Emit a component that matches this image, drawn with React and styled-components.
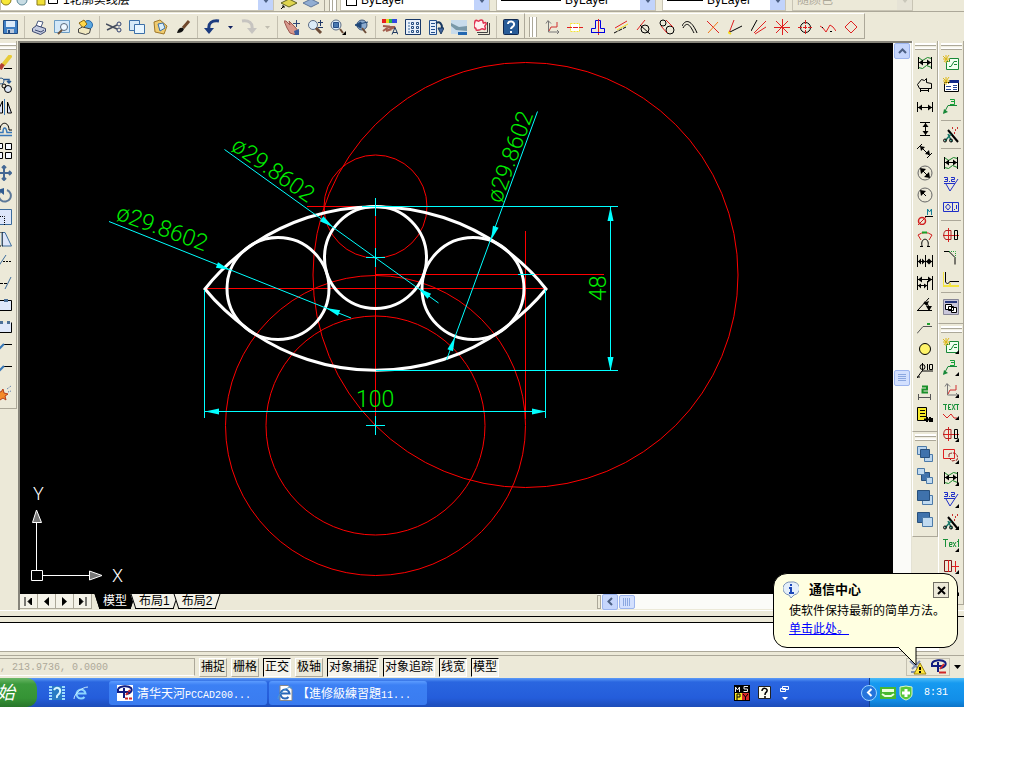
import React from 'react'
import styled, { createGlobalStyle, css } from 'styled-components'

const GlobalStyle = createGlobalStyle`
* {
    box-sizing: border-box;
}

body {
    margin: 0;
    background: #fff;
    font-family: "Liberation Sans", "Noto Sans CJK SC", sans-serif;
    font-size: 12px;
    color: #000;
}

button, select, input {
    font: inherit;
    color: inherit;
}
`;

/* every toolbar glyph, drawn on a 16 x 16 grid */
const glyphs = {
    save: <><path d="M1.5 1.5h14v13h-14z" fill="#3f7fc4" stroke="#204a80" /><path d="M4 2h9v6H4z" fill="#dcebfa" stroke="none" /><path d="M5 10h7v4H5z" fill="#b8c8dc" stroke="none" /><path d="M6 11h2v3H6z" fill="#204a80" stroke="none" /></>,
    print: <><path d="M5 7l2-5 5 1-2 5z" fill="#fff" stroke="#4a5a80" /><path d="M1.5 9.500l4-3 9 3v3l-5 3-8-3z" fill="#c4cce0" stroke="#3c4870" /><path d="M4 11l6 2 3-2" stroke="#3c4870" /></>,
    preview: <><path d="M.5 1.500h15v12H.5z" fill="#d3e8f8" stroke="#6b9cc4" /><circle cx="10" cy="8" r="3.500" fill="#eef8ff" stroke="#58687c" /><path d="M8 11l-4 4" stroke="#6d5038" strokeWidth="2" /></>,
    publish: <><circle cx="11" cy="6" r="4.500" fill="#5aa8e0" stroke="#2868a8" /><path d="M2 4l5-3 3 4-4 4z" fill="#ffd84a" stroke="#8a6814" /><path d="M1.500 10l4-2 8 2-1 4-4 1.500-7-2z" fill="#f0e8c0" stroke="#444" /></>,
    cut: <><path d="M0 5l11 5M1 11l10-5" stroke="#444c5c" strokeWidth="1.500" /><circle cx="13" cy="5" r="2" stroke="#304070" /><circle cx="13" cy="11" r="2" stroke="#304070" /></>,
    copy: <><path d="M.500 1.500h10v10H.5z" fill="#d6eaf8" stroke="#3c70a8" /><path d="M5.500 5.500h10v9h-10z" fill="#e8f6ff" stroke="#3c70a8" /></>,
    paste: <><path d="M2 3l6-2 7 6-3 8-9-2z" fill="#f0cc70" stroke="#a07828" /><path d="M6 5l5-1 2 5-5 3z" fill="#d6ecfa" stroke="#3c70a8" /></>,
    brush: <><path d="M14 2L8 9" stroke="#70482c" strokeWidth="3" /><path d="M2 14c1-4 3-6 6-5l1 1c-1 3-4 4-7 4z" fill="#111" stroke="none" /></>,
    undo: <><path d="M15 2C8 1 4 4 5 10" stroke="#1c3c80" strokeWidth="3" /><path d="M0 9h10l-5 6z" fill="#1c3c80" stroke="none" /></>,
    redo: <><path d="M1 2c7-1 11 2 10 8" stroke="#c6c4c0" strokeWidth="3" /><path d="M6 9h10l-5 6z" fill="#c6c4c0" stroke="none" /></>,
    pan: <><path d="M0 2l2 0 4 4-1-4 6 6 4 5-3 3-6-2-3-5z" fill="#d8988c" stroke="#9c5850" /><path d="M10 12l5-2v6h-4z" fill="#3c5c9c" stroke="none" /><path d="M12.500 1v7M9 4.500h7" stroke="#304878" /></>,
    zoomRt: <><circle cx="6" cy="6" r="4.500" fill="#dcecf8" stroke="#5c6c84" /><path d="M9 9l5 5" stroke="#6c4c38" strokeWidth="3" /><path d="M13.500 1v6M11 3.500h5M11 8.500h5" stroke="#203868" /></>,
    zoomWin: <><circle cx="6" cy="6" r="5" fill="#dcecf8" stroke="#5c6c84" /><path d="M3.500 3.500h5v5h-5z" fill="#4878b0" stroke="#244c88" /><path d="M10 10l3 4" stroke="#6c4c38" strokeWidth="2" /><path d="M16 12v4h-4z" fill="#000" stroke="none" /></>,
    zoomPrev: <><circle cx="9" cy="6" r="5" fill="#8cacd0" stroke="#405878" /><path d="M9 9l4 5" stroke="#6c4c38" strokeWidth="2" /><path d="M15 3L6 5M2 6l6-3v6z" fill="#204878" stroke="#204878" /></>,
    palette: <><path d="M0 0h4v4H0z" fill="#e82020" stroke="none" /><path d="M4 0h3v4H4z" fill="#e8d820" stroke="none" /><path d="M7 0h3v4H7z" fill="#28b848" stroke="none" /><path d="M10 0h5v4h-5z" fill="#3048e0" stroke="none" /><path d="M1 7l12 1-9 4 6-2M1 12l7-5" stroke="#a46050" strokeWidth="2" /><path d="M10 15.500l3-7 3 7M11 13.500h4" stroke="#203860" /></>,
    design: <><path d="M.5.500h15v15H.5z" fill="#e8f0fa" stroke="#183868" /><path d="M4 3v11" stroke="#3c6ca0" strokeDasharray="2 1" /><path d="M6.500 3.500h2v2h-2zM11.500 3.500h2v2h-2zM6.500 7.500h2v2h-2zM11.500 7.500h2v2h-2zM6.500 11.500h2v2h-2zM11.500 11.500h2v2h-2z" stroke="#244c80" /></>,
    tool: <><path d="M1.500 1.500h7v14h-7z" fill="#e4eefa" stroke="#24508c" /><path d="M3 4.500h4M3 7.500h4M3 10.500h4M3 13.500h4" stroke="#24508c" /><path d="M8 4c4-2 6 1 6 5" stroke="#183860" strokeWidth="2" /><path d="M10 9h6l-3 6z" fill="#4468a0" stroke="#183860" /></>,
    sheet: <><path d="M0 1h16v14H0z" fill="#c8dcec" stroke="none" /><path d="M0 4l8 4 8-1v5l-11-1-5-4z" fill="#7898a8" stroke="none" /><path d="M7 14.500h9" stroke="#2468b0" strokeWidth="3" /></>,
    markup: <><path d="M15.500 4v11.500H4M13.500 3v10.500H3" stroke="#444" /><path d="M1 2c2-2 3 1 4 0s4-2 4 1 2-1 3 1-2 2-1 4 0 3-2 2-2 1-4 1-3 1-3-1-2 0-2-3 1-3 1-5z" fill="#fff0f0" stroke="#e03050" strokeWidth="1.500" /></>,
    help: <><rect x="0.500" y="0.500" width="15" height="15" rx="1" fill="#285c98" stroke="#102850" /><path d="M5 5c0-4 7-3 6 1-.5 2-3 2-3 4M8 12v2" stroke="#fff" strokeWidth="2" /></>,
    axes: <><path d="M4.500 2v11H15M2 4.500l2-3 3 3M13 11l2 2-2 2" stroke="#777" /><path d="M5 12l2-4h6V3" stroke="#d03030" /></>,
    centerline: <><path d="M3.500 4.500h9v8h-9z" fill="#fff" stroke="#f4e430" strokeDasharray="2 1" /><path d="M0 8.500h16" stroke="#e02020" strokeDasharray="5 1" /></>,
    symmetry: <><path d="M1.500 13.500v-4h4v-8h5v8h4v4z" stroke="#0000e0" /><path d="M8.500 0v16" stroke="#e02020" /><path d="M1 13.500h14" stroke="#0000e0" /></>,
    parallel: <><path d="M2 9L14 2" stroke="#e02020" /><path d="M4 11l11-6" stroke="#f2df20" /><path d="M1 14l12-6" stroke="#000" strokeDasharray="4 1" /></>,
    tangent: <><path d="M1 11L9 1" stroke="#e02020" /><circle cx="9" cy="10" r="4" /><path d="M4 6l10 9" /></>,
    twoCircles: <><circle cx="4" cy="4" r="3" /><circle cx="11" cy="11" r="4" /><path d="M2 7l6 7M7 1l7 7" stroke="#e02020" /></>,
    offset: <><path d="M0 7C4-1 10 2 15 14" /><path d="M1 9c4-7 7-3 11 5" /></>,
    cross: <><path d="M2 2l12 12" stroke="#e02020" /><path d="M13 3L3 14" stroke="#f07818" /></>,
    angleLine: <><path d="M1 14L6 1" stroke="#e02020" /><path d="M2 13l12-6" /><path d="M0 13l3 2" stroke="#f6df20" strokeWidth="2" /></>,
    fan: <><path d="M0 12L6 1" /><path d="M3 14L15 2M4 15l11-7" stroke="#e02020" /></>,
    star: <path d="M8.500 0v16M0 8.500h16M2 2l12 12M14 2L2 14" stroke="#e02020" />,
    target: <><circle cx="8.500" cy="8.500" r="5" /><path d="M8.500 1v15M1 8.500h15" stroke="#e02020" strokeDasharray="4 1" /></>,
    wave: <><path d="M0 7l3 2 3 4 4-7 3 2 3 4" stroke="#e02020" /><path d="M2 8.500h1M10 12.500h2" /></>,
    diamond: <path d="M8 2l6 6-6 6-6-6z" stroke="#e02020" />,

    erase: <><path d="M15 0L7 10" stroke="#e8cc38" strokeWidth="4" /><path d="M7 9l-3 5" stroke="#b44030" strokeWidth="4" /><path d="M8 13.500h8" /></>,
    copyObj: <><circle cx="5" cy="4" r="3" stroke="#38618c" /><circle cx="12" cy="12" r="3.500" fill="#dce8f8" /><circle cx="8" cy="9" r="2" /><path d="M8 2.500h5v4M11 4l2 2 2-2" stroke="#285890" strokeWidth="1.500" /></>,
    mirror: <><path d="M8.500 0v16" stroke="#3878b8" /><path d="M6.500 2v12H1zM11.500 3v11h4z" fill="#dce4f8" /></>,
    offsetObj: <><path d="M0 9h4c0-9 9-9 9 0h3" /><path d="M0 11.500h7c0-6 3-6 4 0h5M0 14.500h16" stroke="#3878b8" strokeWidth="1.500" /></>,
    array: <path d="M1.500.500h5v5h-5zM9.500.500h6v6h-6zM1.500 9.500h5v6h-5zM9.500 9.500h6v6h-6z" fill="#f4f8ff" />,
    move: <path d="M8 1v14M1 8h14M6 3l2-2 2 2M6 13l2 2 2-2M3 6L1 8l2 2M13 6l2 2-2 2" stroke="#446894" strokeWidth="2" />,
    rotate: <><path d="M5 4a6 6 0 1 0 6-1" stroke="#5c7898" strokeWidth="2" /><path d="M8 1v7L2 3z" fill="#2f5b90" stroke="none" /></>,
    scale: <><path d="M0 .500h15.500v15H0z" fill="#dde6fa" stroke="#3c6c9c" /><path d="M0 7.500h8.500V16" strokeDasharray="1 1" /></>,
    stretch: <><path d="M6 1.500h3L15.500 15H6z" fill="#dde6fa" stroke="#3c6c9c" /><path d="M6.500 1.500H1V15h5.500z" strokeDasharray="1 1" /></>,
    trim: <><path d="M2 14L10 2" stroke="#3c6c9c" /><path d="M7 8.500h9" strokeDasharray="2 1" /></>,
    extend: <><path d="M9 14l6-12" stroke="#3c6c9c" /><path d="M0 8.500h12" strokeDasharray="3 1" /></>,
    breakPt: <><path d="M1 3.500h14.500v10H1z" fill="#dfe8fa" /><path d="M8 2h4v3H8z" fill="#4c7098" stroke="none" /></>,
    breakObj: <><path d="M7 3.500H1v10h14.500v-10" fill="#dfe8fa" /><path d="M4 2h3v3H4zM11 2h3v3h-3z" fill="#4c7098" stroke="none" /></>,
    chamfer: <><path d="M7 3.500h9" /><path d="M1 10l7-7" stroke="#3878b8" strokeWidth="2" /></>,
    explode: <><path d="M2 13l1-4-2-3 4 1 2-3 1 4 4 1-3 2 1 4-3-2-3 2z" fill="#f48a28" stroke="#b43c18" /><path d="M11 4l4-3M12 7l3-1" stroke="#4c70a8" strokeDasharray="1 1" /></>,

    dimSmart: <><path d="M1.500 2.500l4 3 5-3 4 1v9l-5-2-4 3-4-1z" stroke="#188828" /><path d="M1.500 2v12M14.500 2v12M2 7.500h12" /><path d="M2 7.500l4-3v6zM14 7.500l-4-3v6z" fill="#000" stroke="none" /></>,
    dimHouse: <><path d="M.5 7.500l4-5 3 1 2-2v4l5 1v5h-12zM3.500 11v4M11.500 11v4M4 13.500h8" /></>,
    dimH: <><path d="M.500 3v10M15.500 3v10M1 8.500h14" /><path d="M1 8.500l4-3v6zM15 8.500l-4-3v6z" fill="#000" stroke="none" /></>,
    dimV: <><path d="M3 1.500h10M3 14.500h10M8.500 2v12" /><path d="M8.500 2l-3 4h6zM8.500 14l-3-4h6z" fill="#000" stroke="none" /></>,
    dimA: <><path d="M0 6l5-5M10 15l5-5M4 4l8 8" /><path d="M3 3l1 5 4-4zM13 12l-1-5-4 4z" fill="#000" stroke="none" /></>,
    dimD: <><circle cx="8" cy="8" r="7" stroke="#666" /><path d="M4 4l8 8" /><path d="M3 3l1 6 5-5zM13 13l-1-6-5 5z" fill="#000" stroke="none" /></>,
    dimR: <><circle cx="8" cy="8" r="7" stroke="#666" /><path d="M4 4l5 5" /><path d="M3 3l1 6 5-5z" fill="#000" stroke="none" /></>,
    dimM: <><circle cx="5" cy="12" r="3.500" stroke="#d02020" strokeWidth="1.500" /><path d="M1 16l8-8" stroke="#d02020" /><path d="M8 7.500h8" /><path d="M10.500 6V0l2 3 2-3v6" stroke="#188098" /></>,
    dimArc: <><path d="M1 4q7-5 14 0l-3 5M1 4l3 5" stroke="#d02020" /><path d="M5 1.500h5" stroke="#18a028" strokeWidth="2" /><path d="M5 15c-2-9 8-9 6 0M3 15.500h3M10 15.500h3" /></>,
    dimC: <><path d="M.500 2v12M8.500 2v12M15.500 2v12M1 8.500h14" /><path d="M1 8.500l3-3v6zM15 8.500l-3-3v6zM8 8.500l-3-3v6zM9 8.500l3-3v6z" fill="#000" stroke="none" /></>,
    dimB: <><path d="M.500 1v14M15.500 1v14M10.500 6v9M1 4.500h14M1 10.500h9" /><path d="M1 4.500l4-3v6zM15 4.500l-4-3v6zM1 10.500l3-2v5zM10 10.500l-3-2v5z" fill="#000" stroke="none" /></>,
    dimAng: <><path d="M0 13.500h15M1 13L12 1" /><path d="M7 5c4 1 5 4 5 8" /><path d="M6 6l6-2-2 5zM12 14l-3-5h6z" fill="#000" stroke="none" /></>,
    leader: <><path d="M0 14.500l6-7h9" stroke="#555" /><path d="M10 4h3v2h-3z" fill="#20a030" stroke="none" /></>,
    ball: <circle cx="8" cy="8" r="5.500" fill="#fff46a" />,
    phi: <><path d="M0 15l5-7h11M0 14h3" /><circle cx="5.500" cy="4" r="2.500" /><path d="M5.500 0v8M10.500 1v6M12.500 1.500h3v5h-3z" /></>,
    two: <><path d="M5 1.500h5v3H5.500v3H11" stroke="#189028" strokeWidth="2" /><path d="M1.500 9v6M13.500 9v6M2 12.500h11" stroke="#555" /></>,
    bolt: <><path d="M.5.500h9v13h-9z" fill="#f8ec28" /><path d="M3 3.500h5M3 6.500h5M3 9.500h6" /><path d="M7 12.500h9M10 10v5M13 10v5M15 11v4" strokeWidth="2" /></>,
    orderA: <><path d="M.500.500h9v8h-9zM7.500 8.500h8v7h-8z" fill="#b8d4ee" stroke="#4c7aa8" /><path d="M3.500 3.500h9v8h-9z" fill="#3f72ac" stroke="#28507c" /></>,
    orderB: <><path d="M4.500 4.500h8v8h-8z" fill="#3f72ac" stroke="#28507c" /><path d="M.500.500h7v6h-7zM9.500 9.500h6v6h-6z" fill="#c0daf0" stroke="#4c7aa8" /></>,
    orderC: <><path d="M5.500 5.500h10v9h-10z" fill="#c0daf0" stroke="#4c7aa8" /><path d="M.500.500h12v10h-12z" fill="#3f72ac" stroke="#28507c" /></>,
    orderD: <><path d="M.500.500h12v10h-12z" fill="#3f72ac" stroke="#28507c" /><path d="M5.500 5.500h10v9h-10z" fill="#c0daf0" stroke="#4c7aa8" /></>,

    newPart: <><path d="M3.500 6.500h3v-3h9v11h-12z" fill="#f0fff0" stroke="#188838" /><path d="M6 11.500h2l3-5h3M11 9.500h3" stroke="#188838" /><path d="M0 1l6 6M6 0L1 7M3 0v8M0 4h7" stroke="#ddb818" /></>,
    newSheet: <><path d="M1.500 5.500h14v9h-14z" fill="#fff" /><path d="M6 3h10v3H6z" fill="#102888" stroke="none" /><path d="M3 9.500h5M3 12.500h5M10 8.500h4M10 10.500h4M10 12.500h4" stroke="#284898" /><path d="M0 1l6 6M6 0L1 7M3 0v8M0 4h7" stroke="#ddb818" /></>,
    three: <><path d="M1 14l4-7.500h9" stroke="#188838" /><path d="M0 15l1-5 4 3z" fill="#188838" stroke="none" /><path d="M7 .500h4.500v5H7M8 2.500h3" stroke="#18a038" /></>,
    wand: <><path d="M5 3l10 12" strokeWidth="2" /><path d="M8 7L2 14M5 7l4 8" stroke="#187868" strokeWidth="1.500" /><circle cx="2" cy="13.500" r="1.500" /><circle cx="8" cy="13.500" r="1.500" /><path d="M9 1h1M12 3h1M14 1h1M11 6h1" stroke="#c83030" strokeWidth="2" /></>,
    rough: <><path d="M1 6.500h11M3 7l4 7L15 2" stroke="#2030c8" /><path d="M1 .500h3.500v4H1M2 2.500h2M6.500 4v1M8 .500h3.500v2h-3v2H12" stroke="#2030c8" /></>,
    gdt: <><path d="M.5 3.500h15v9H.5zM9.500 4v8M13.500 6v4M11 10.500h1" stroke="#2030c8" /><path d="M5 5l2.500 3L5 11 2.500 8z" stroke="#2030c8" /></>,
    bearing: <><path d="M0 8.500h16M5.500 1v14" stroke="#d82020" /><path d="M8 3.500H3c-3 1-3 8 0 9h5z" stroke="#b02020" /><path d="M11.500 3.500h3v9h-3z" /></>,
    corner: <><path d="M1 2.500h5l6 6v7" /><path d="M6 2.500h6.500v6" stroke="#28a038" strokeDasharray="1 1" /></>,
    rib: <><path d="M0 1v14h7M7 12v3h9" stroke="#f4e440" strokeWidth="2" /><path d="M2.500 1v10l2 2 3-3M7 10.500h9" /></>,
    library: <><path d="M.5.5h15v15H.5z" fill="#c9c6da" stroke="#858495" /><path d="M2 3h12" stroke="#28387c" strokeWidth="2" /><path d="M2.500 5.500h6v5h-6zM8.500 8.500h5v5h-5zM5.500 7.500h5v4h-5z" fill="#fff" /></>,
    text: <><path d="M0 .500h4M2.500 1v5M8 .500H5.500v5H8M5 3.500h2M9 0l3 6M12 0L9 6M12 .500h4M14.500 1v5" stroke="#189038" /><path d="M0 10l4 4 4-4 3 4h3" stroke="#d82020" /></>,
    textSmall: <path d="M0 3.500h5M2.500 4v7M6 8.500h3v-2H6.500v4H9M10 6l3 5M13 6l-3 5M15.500 3v8M14 5.500h2" stroke="#189038" />,
    redBox: <><path d="M.500 1.500h11v9h-11z" stroke="#e02020" /><path d="M6 6c6-3 10 1 8 6l-5 1-3-3z" stroke="#922" strokeDasharray="3 1" /></>,
    shaft: <><path d="M1.500 2.500h7v11h-7z" stroke="#801818" /><path d="M5.500 2v12M9 8.500h7M12.500 3v11" stroke="#e02020" /></>,
};

const standardTools = ['save', '|', 'print', 'preview', 'publish', '|', 'cut', 'copy', 'paste', 'brush', '|', 'undo', 'v', 'redo', 'v', '|', 'pan', 'zoomRt', 'zoomWin', 'zoomPrev', '|', 'palette', 'design', 'tool', 'sheet', 'markup', '|', 'help'];
const drawTools = ['axes', 'centerline', 'symmetry', 'parallel', 'tangent', 'twoCircles', 'offset', 'cross', 'angleLine', 'fan', 'star', 'target', 'wave', 'diamond'];
const modifyTools = ['erase', 'copyObj', 'mirror', 'offsetObj', 'array', 'move', 'rotate', 'scale', 'stretch', 'trim', 'extend', 'breakPt', 'breakObj', 'chamfer', 'chamfer', 'explode'];
const dimTools = ['dimSmart', 'dimHouse', 'dimH', 'dimV', 'dimA', 'dimD', 'dimR', 'dimM', 'dimArc', 'dimC', 'dimB', 'dimAng', 'leader', 'ball', 'phi', 'two', 'bolt'];
const orderTools = ['orderA', 'orderB', 'orderC', 'orderD'];
const partTools = ['newPart', 'newSheet', 'three', '|', 'wand', '|', 'dimSmart', 'rough', 'gdt', '|', 'bearing', 'corner', 'rib', '|', 'library'];
const flyoutTools = ['newPart', 'three', 'axes', 'text', 'bearing', 'redBox', 'dimSmart', 'rough', 'wand', 'textSmall', 'shaft', 'redBox'];

const statusModes = [
    ['捕捉', false], ['栅格', false], ['正交', true], ['极轴', false],
    ['对象捕捉', true], ['对象追踪', true], ['线宽', true], ['模型', true],
];

const Glyph = ({ name, flyout }) => (
    <Icon viewBox="0 0 16 16" fill="none" stroke="#000" aria-hidden="true">
        {glyphs[name]}
        {flyout && <path d="M16 12v4h-4z" fill="#000" stroke="none" />}
    </Icon>
)

const Tools = ({ items, vertical, flyout }) => items.map((item, i) => {
    if (item === '|') return <Divider key={i} $vertical={vertical} />
    if (item === 'v') return (
        <DropButton key={i} aria-label="more" disabled={i > 13}>
            <svg width="5" height="3"><path d="M0 0h5L2.500 3z" fill="currentColor" /></svg>
        </DropButton>
    )
    return <ToolButton key={i} $vertical={vertical} aria-label={item}><Glyph name={item} flyout={flyout} /></ToolButton>
})

const Combo = ({ label, value, line, swatch, children, ...rest }) => (
    <ComboBox {...rest}>
        {children}
        {swatch && <Swatch />}
        {line && <LineSample $w={line} />}
        <select aria-label={label} disabled={rest.$off}><option>{value}</option></select>
        <ComboArrow $off={rest.$off}><svg width="8" height="5"><path d="M0 0h8L4 5z" fill="currentColor" /></svg></ComboArrow>
    </ComboBox>
)

/* arrow head with its tip at x,y, turned by deg; 0 points right */
const Arrow = ({ x, y, deg }) => (
    <path d="M0 0L-14 3V-3z" fill="#0ff" stroke="none" transform={`translate(${x} ${y}) rotate(${deg})`} />
)

const Drawing = () => (
    <DrawingArea role="img" aria-label="模型">
        <g transform="translate(-20 -43)" fill="none">
            <g stroke="#f00">
                <circle cx="525.5" cy="275" r="212.5" />
                <circle cx="375.5" cy="425.5" r="150" />
                <circle cx="375.5" cy="425.5" r="109.5" />
                <circle cx="375.5" cy="206.5" r="51.5" />
                <path d="M375.500 207V425M205 288.500H546M307 206.500H375M525.500 231V419M375 274.500H604" />
            </g>
            <g stroke="#fff" strokeWidth="3">
                <circle cx="375.5" cy="257.5" r="51" />
                <circle cx="278" cy="288.500" r="51" />
                <circle cx="473" cy="288.500" r="51" />
                <path d="M205 289Q222 267 249 247A218.500 218.500 0 0 1 502 247Q529 267 546 289Q529 310 502 330A218.500 218.500 0 0 1 249 330Q222 310 205 289z" />
            </g>
            <g stroke="#0ff">
                <path d="M362 206.500H618M376 370.500H618M610.500 207V371M204.500 290V418M545.500 290V418M205 411.500H546" />
                <path d="M366 425.500H385M375.500 416V435M375.500 198V216M366 257.500H385M375.500 248V267M518 274.500H534" />
                <path d="M109 221.500L351 318M224.500 149.500L438.500 303M537.500 111.500L446.500 360" />
            </g>
            <Arrow x={610.5} y={207} deg={-90} />
            <Arrow x={610.5} y={371} deg={90} />
            <Arrow x={205} y={411.5} deg={180} />
            <Arrow x={546} y={411.5} deg={0} />
            <Arrow x={230} y={270} deg={21} />
            <Arrow x={326} y={308} deg={201} />
            <Arrow x={333} y={227} deg={36} />
            <Arrow x={418} y={288} deg={216} />
            <Arrow x={491} y={240} deg={110} />
            <Arrow x={455} y={337} deg={-70} />
            <DimText transform="translate(115 219) rotate(20)">ø29.8602</DimText>
            <DimText transform="translate(230 149) rotate(35)">ø29.8602</DimText>
            <DimText transform="translate(501 204) rotate(-70)">ø29.8602</DimText>
            <DimText x="356" y="407">100</DimText>
            <DimText transform="translate(606 301) rotate(-90)">48</DimText>
            <g stroke="#fff">
                <path d="M31.500 570.500h11v10h-11zM36.500 570V522M43 575.500H89" />
                <path d="M36.500 510L32.500 522.500h9zM102 575.500L89.500 571v9z" fill="#777" />
            </g>
            <UcsText x="33" y="500">Y</UcsText>
            <UcsText x="112" y="582">X</UcsText>
        </g>
    </DrawingArea>
)

const App = () => {
    return (
        <Window>
            <GlobalStyle />
            <PropertyRow>
                <Combo label="图层" value="1轮廓实线层" $w={274}>
                    <LayerMarks width="60" height="22" viewBox="0 0 60 22">
                        <circle cx="5" cy="11" r="5" fill="#f8e838" stroke="#887818" />
                        <circle cx="21" cy="11" r="5" fill="#c8dce4" stroke="#5c8898" />
                        <path d="M36 9h8v7h-8z" fill="#f0e038" stroke="#887818" />
                        <path d="M47.500 6.500h9v8h-9z" fill="#fff" stroke="#000" />
                    </LayerMarks>
                </Combo>
                <LayerButtons>
                    <svg width="18" height="18" viewBox="0 0 18 18"><path d="M1 10l8-4 8 4-8 4z" fill="#dfd54e" stroke="#5c6020" /><path d="M1 16l3-3M2 13h2v2" stroke="#000" fill="none" /></svg>
                    <svg width="18" height="18" viewBox="0 0 18 18"><path d="M1 10l8-4 8 4-8 4z" fill="#91add2" stroke="#5f789b" /></svg>
                </LayerButtons>
                <Grip />
                <Combo label="颜色" value="ByLayer" swatch $w={150} />
                <Combo label="线型" value="ByLayer" line={60} $w={160} />
                <Combo label="线宽" value="ByLayer" line={36} $w={124} />
                <Combo label="打印样式" value="随颜色" $w={121} $off />
            </PropertyRow>

            <ToolRow>
                <HBar $first><Tools items={standardTools} /></HBar>
                <HBar><Grip /><Tools items={drawTools} /></HBar>
            </ToolRow>

            <Workspace>
                <SideColumn $left>
                    <VBar $left>
                        <Handle />
                        <Tools items={modifyTools} vertical />
                    </VBar>
                </SideColumn>

                <Document>
                    <ModelRow>
                        <Drawing />
                        <ScrollV>
                            <ScrollButton aria-label="up"><svg width="9" height="6"><path d="M1 5l3.500-3.500L8 5" fill="none" stroke="#4d6185" strokeWidth="2" /></svg></ScrollButton>
                            <Thumb><svg width="8" height="8"><path d="M0 .5h8M0 2.500h8M0 4.500h8M0 6.500h8" stroke="#8ca8e0" /></svg></Thumb>
                        </ScrollV>
                    </ModelRow>
                    <TabRow>
                        <NavButton aria-label="first"><svg width="9" height="9"><path d="M1 0v9M7.500 1v7L4 4.500z" stroke="#000" /></svg></NavButton>
                        <NavButton aria-label="prev"><svg width="9" height="9"><path d="M7 0v9L2 4.500z" /></svg></NavButton>
                        <NavButton aria-label="next"><svg width="9" height="9"><path d="M2 0v9l5-4.500z" /></svg></NavButton>
                        <NavButton aria-label="last"><svg width="9" height="9"><path d="M8 0v9M1.500 1v7L5 4.500z" stroke="#000" /></svg></NavButton>
                        <Tabs>
                            <Tab $active><span>模型</span></Tab>
                            <Tab><span>布局1</span></Tab>
                            <Tab><span>布局2</span></Tab>
                        </Tabs>
                        <ScrollH>
                            <Splitter />
                            <ScrollButton aria-label="left"><svg width="6" height="9"><path d="M5 1L1.500 4.500 5 8" fill="none" stroke="#4d6185" strokeWidth="2" /></svg></ScrollButton>
                            <Thumb $flat><svg width="8" height="8"><path d="M.5 0v8M2.500 0v8M4.500 0v8M6.500 0v8" stroke="#8ca8e0" /></svg></Thumb>
                        </ScrollH>
                    </TabRow>
                </Document>

                <SideColumn>
                    <VBar><Handle /><Tools items={dimTools} vertical /></VBar>
                    <VBar><Handle /><Tools items={orderTools} vertical /></VBar>
                </SideColumn>
                <SideColumn>
                    <VBar><Handle /><Tools items={partTools} vertical /></VBar>
                    <VBar><Handle /><Tools items={flyoutTools} vertical flyout /></VBar>
                </SideColumn>
            </Workspace>

            <CommandDock><CommandLine aria-label="命令" /></CommandDock>

            <StatusBar>
                <Coords>, 213.9736, 0.0000</Coords>
                {statusModes.map(([name, on]) => <Mode key={name} $on={on}>{name}</Mode>)}
                <CadTray>
                    <svg width="18" height="16" viewBox="0 0 18 16"><path d="M1 2l9 8M3 10l8-8M2 13h8" stroke="#8090b0" strokeWidth="2" /><path d="M11 4l6 11H5z" fill="#ffe63c" stroke="#9c8410" /><path d="M11 8v3M11 12v2" stroke="#000" strokeWidth="2" /></svg>
                    <CadLogo />
                </CadTray>
                <MenuArrow aria-label="status menu"><svg width="7" height="4"><path d="M0 0h7L3.500 4z" /></svg></MenuArrow>
            </StatusBar>

            <Taskbar>
                <StartButton>始</StartButton>
                <QuickLaunch>
                    <svg width="16" height="16" viewBox="0 0 16 16"><path d="M1.500 1v14M14.500 1v14" stroke="#9cdcff" strokeWidth="3" strokeDasharray="2 1" /><path d="M3 1h10v14H3z" fill="#287cc4" /><path d="M5 5c2-4 7-2 6 2s-4 2-3 6" stroke="#d4f4ff" strokeWidth="2" fill="none" /></svg>
                    <IeLogo />
                </QuickLaunch>
                <Task><CadLogo paper /><span>清华天河<Mono>PCCAD200...</Mono></span></Task>
                <Task><IeLogo paper /><span>【進修級練習題<Mono>11...</Mono></span></Task>
                <LanguageBar>
                    <svg width="16" height="16" viewBox="0 0 16 16"><path d="M0 0h16v16H0z" /><path d="M1.500 7V2l2 3 2-3v5M14 1.500h-4v2.500h3.500v2.500H9.500" stroke="#eee" fill="none" /><path d="M1 8h7v7H1z" fill="#f8e828" /><path d="M8 8h7v7H8z" fill="#d82828" /><path d="M3 15V9h3v3H3M9 9l2.500 3L14 9M11.500 12v3" stroke="#000" fill="none" /></svg>
                    <svg width="14" height="14" viewBox="0 0 14 14"><path d="M.5.5h12v12H.5z" fill="#fffff0" stroke="#222" /><path d="M4 5c0-4 6-3 5 0-.5 2-2 1-2 4M7 10v2" stroke="#000" strokeWidth="1.500" fill="none" /></svg>
                    <svg width="9" height="16" viewBox="0 0 9 16"><path d="M2.500 1.500h6v3h-6zM.5 3.500h5v3h-5z" fill="#2b63dc" stroke="#fff" /><path d="M2 12h6l-3 3z" fill="#fff" /></svg>
                </LanguageBar>
                <SystemTray>
                    <Chevron aria-label="tray"><svg width="7" height="9"><path d="M5.500 1L2 4.500 5.500 8" fill="none" stroke="#fff" strokeWidth="2" /></svg></Chevron>
                    <svg width="16" height="14" viewBox="0 0 16 14"><path d="M0 1h16v12H0z" fill="#48b830" /><path d="M2 3h12v3H2z" fill="#e8ffd8" /><path d="M2 8l3 2h6l3-2" stroke="#e8ffd8" fill="none" strokeWidth="2" /></svg>
                    <svg width="14" height="16" viewBox="0 0 14 16"><path d="M1 2l6-1 6 1v7c0 3-3 5-6 6-3-1-6-3-6-6z" fill="#58c838" stroke="#e0f8c8" /><path d="M7 4v8M3 8h8" stroke="#fff" strokeWidth="3" /></svg>
                    <Mono>8:31</Mono>
                </SystemTray>
            </Taskbar>

            <Balloon>
                <BalloonHead>
                    <svg width="16" height="18" viewBox="0 0 16 18"><path d="M8 1a7 6.500 0 0 1 3 13l-3 3-2-3A7 6.500 0 0 1 8 1z" fill="#e4effa" stroke="#7c94b8" /><path d="M8 3v2M6 7h2v5M6 12h5" stroke="#1c48b8" strokeWidth="2" fill="none" /></svg>
                    <strong>通信中心</strong>
                    <CloseButton aria-label="close"><svg width="9" height="9"><path d="M1 1l7 7M8 1L1 8" stroke="#000" strokeWidth="2" /></svg></CloseButton>
                </BalloonHead>
                <p>使软件保持最新的简单方法。</p>
                <a href="#update">单击此处。</a>
                <Tail width="21" height="20"><path d="M1 0l18 18V0" fill="#ffffe1" stroke="#000" /></Tail>
            </Balloon>
        </Window>
    )
}

const CadLogo = ({ paper }) => (
    <svg width="16" height="16" viewBox="0 0 16 16">
        {paper && <path d="M0 0h16v16H0z" fill="#fff" />}
        <path d="M1 4c2-3 10-4 13-1 2 3-1 5-4 6M1 4v3h11" stroke="#101c80" strokeWidth="2" fill="none" />
        <path d="M7 3v10" stroke="#101c80" strokeWidth="2" />
        <path d="M9 10l4-5M8 13.500h7" stroke="#d02828" strokeWidth="2" strokeDasharray={paper ? '3 1' : undefined} />
    </svg>
)

const IeLogo = ({ paper }) => (
    <svg width="16" height="16" viewBox="0 0 16 16">
        {paper && <path d="M3 .5h8l4 4v11H3z" fill="#fff" stroke="#888" />}
        <path d="M4 8.500h8.500a4.500 4.500 0 1 0-1 3.500" stroke={paper ? '#2a68b8' : '#8cd4ff'} strokeWidth="2" fill="none" />
        <path d="M1 14C1 9 9 2 15 2" stroke={paper ? '#4a98d8' : '#c8ecff'} fill="none" />
    </svg>
)

const Window = styled.div`
position: relative;
width: calc(100% - 60px);
background: #ece9d8;
overflow: hidden;
`;

const PropertyRow = styled.div`
height: 12px;
display: flex;
align-items: flex-end;
overflow: hidden;
border-bottom: 1px solid #aca899;
`;

const ComboBox = styled.label`
width: ${p => p.$w}px;
height: 22px;
flex-shrink: 0;
display: flex;
align-items: center;
margin-right: 6px;
border: 1px solid #c8c4b4;
background: ${p => p.$off ? '#ece9d8' : '#fff'};

select{
    flex: 1;
    min-width: 0;
    height: 20px;
    padding: 0 4px;
    border: 0;
    appearance: none;
    background: transparent;
    color: ${p => p.$off ? '#aca899' : '#000'};
    opacity: 1;
}
`;

const ComboArrow = styled.span`
width: 15px;
height: 20px;
display: flex;
align-items: center;
justify-content: center;
background: ${p => p.$off ? '#e6e3d6' : '#c1d3fb'};
color: ${p => p.$off ? '#c9c7ba' : '#4d6185'};
`;

const Swatch = styled.span`
width: 11px;
height: 11px;
margin-left: 5px;
border: 1px solid #000;
`;

const LineSample = styled.span`
width: ${p => p.$w}px;
height: 1px;
margin-left: 4px;
background: #000;
`;

const LayerMarks = styled.svg`
flex-shrink: 0;
margin-right: -2px;
`;

const LayerButtons = styled.div`
height: 18px;
width: 45px;
flex-shrink: 0;
display: flex;
gap: 4px;
border-right: 1px solid #aca899;
`;

const Grip = styled.div`
width: 8px;
height: 20px;
flex-shrink: 0;
margin: 0 3px 0 4px;
border: solid #aca899;
border-width: 0 1px;
background: linear-gradient(90deg, #fff 2px, #aca899 2px, #aca899 3px, #fff 3px);
`;

const Handle = styled.div`
width: 21px;
height: 7px;
margin: 2px 0;
flex-shrink: 0;
border: solid #aca899;
border-width: 0 0 1px;
background: linear-gradient(#fff 2px, #aca899 2px, #aca899 3px, #ece9d8 3px, #fff 5px);
`;

const ToolRow = styled.div`
height: 29px;
padding: 1px 0 2px;
display: flex;
`;

const HBar = styled.div`
display: flex;
align-items: center;
padding: 2px 2px 0 0;
border: solid #aca899;
border-width: 0 1px 1px 0;
border-top: 1px solid #fff;
${p => p.$first && css`
    margin-left: -2px;
`}
`;

const Icon = styled.svg`
width: 16px;
height: 16px;
flex-shrink: 0;
`;

const ToolButton = styled.button`
width: ${p => p.$vertical ? 22 : 23}px;
height: 22px;
flex-shrink: 0;
padding: 0 0 0 ${p => p.$vertical ? 0 : 1}px;
display: flex;
align-items: center;
justify-content: center;
border: 0;
background: transparent;
`;

const Divider = styled.div`
flex-shrink: 0;
${p => p.$vertical ? css`
    width: 20px;
    height: 1px;
    margin: 2px 0 3px;
    background: #aca899;
` : css`
    width: 1px;
    height: 22px;
    margin: 0 2px 0 3px;
    background: #c4c0b0;
`}
`;

const DropButton = styled.button`
width: 14px;
height: 22px;
padding: 0;
display: flex;
align-items: center;
justify-content: center;
border: 0;
background: transparent;
color: #102060;

&:disabled{
    color: #c0bdb0;
}
`;

const MenuArrow = styled(DropButton)`
margin-left: -4px;
`;

const Workspace = styled.div`
display: flex;
border-bottom: 1px solid #fff;
`;

const SideColumn = styled.div`
width: ${p => p.$left ? 18 : 26}px;
flex-shrink: 0;
display: flex;
flex-direction: column;
`;

const VBar = styled.div`
display: flex;
flex-direction: column;
align-items: center;
padding-bottom: 5px;
border: solid #aca899;
border-width: 0 1px 1px 0;
border-left: 1px solid #fff;
${p => p.$left && css`
    align-items: flex-start;
    margin-right: 1px;
    padding-bottom: 4px;
    border-left: 0;
    overflow: hidden;

    ${ToolButton}{
        margin-left: -7px;
    }
`}
`;

const Document = styled.div`
flex: 1;
min-width: 0;
border: solid #86847a;
border-width: 2px 0 0 2px;
`;

const ModelRow = styled.div`
display: flex;
background: #000;
`;

const DrawingArea = styled.svg`
display: block;
flex: 1;
min-width: 0;
height: 551px;
`;

const DimText = styled.text`
fill: #00f000;
stroke: none;
font-family: Roboto, "Noto Sans", sans-serif;
font-weight: 300;
font-size: 23px;
`;

const UcsText = styled(DimText)`
fill: #fff;
font-size: 18px;
`;

const ScrollV = styled.div`
width: 19px;
display: flex;
flex-direction: column;
align-items: center;
justify-content: space-between;
padding-bottom: 208px;
background: #fbfbf8;
border-right: 1px solid #e4e2d4;
`;

const ScrollButton = styled.button`
width: 16px;
height: 16px;
padding: 0;
display: flex;
align-items: center;
justify-content: center;
border: 1px solid #9db5ee;
border-radius: 2px;
background: #c6d6fc;
`;

const Thumb = styled.div`
width: 16px;
height: ${p => p.$flat ? 14 : 16}px;
display: flex;
align-items: center;
justify-content: center;
border: 1px solid #9db5ee;
border-radius: 2px;
background: #d3e0fe;
`;

const TabRow = styled.div`
height: 16px;
display: flex;
`;

const NavButton = styled.button`
width: 18px;
height: 15px;
padding: 0;
display: flex;
align-items: center;
justify-content: center;
border: solid #aca899;
border-width: 0 1px 1px 0;
background: #f4f2e8;
`;

const Tabs = styled.div`
display: flex;
flex: 1;
padding-left: 5px;
`;

const Tab = styled.button`
position: relative;
height: 14px;
padding: 0 6px;
border: 0;
background: transparent;
color: ${p => p.$active ? '#fff' : '#000'};
line-height: 14px;
white-space: nowrap;

span{
    position: relative;
    z-index: 1;
}

&::before, &::after{
    content: "";
    position: absolute;
    top: 0;
    width: 52%;
    height: 14px;
    border-bottom: 1px solid #000;
    background: ${p => p.$active ? '#000' : '#f4f2e8'};
}

&::before{
    left: 0;
    border-left: 1px solid #000;
    transform: skewX(18deg);
}

&::after{
    right: 0;
    border-right: 1px solid #000;
    transform: skewX(-18deg);
}
`;

const ScrollH = styled.div`
width: 315px;
height: 15px;
display: flex;
align-items: center;
gap: 1px;
background: #fbfbf8;
`;

const Splitter = styled.div`
width: 4px;
height: 14px;
border: 1px solid #aca899;
background: #ece9d8;
`;

const CommandDock = styled.div`
margin-top: 5px;
height: 40px;
padding: 5px 25px 4px 0;
border-top: 1px solid #000;
border-bottom: 1px solid #aca899;
`;

const CommandLine = styled.input`
display: block;
width: 100%;
height: 30px;
border: solid #aca899;
border-width: 0 0 1px;
border-top: 1px solid #000;
border-radius: 0;
background: #fff;
`;

const StatusBar = styled.div`
height: 22px;
padding: 1px 0;
display: flex;
align-items: center;
gap: 4px;
`;

const Mono = styled.span`
font-family: "Liberation Mono", monospace;
font-size: 10px;
`;

const Coords = styled.output`
width: 195px;
height: 18px;
line-height: 18px;
border: solid #aca899;
border-width: 1px 1px 0 0;
border-bottom: 1px solid #fff;
font-family: "Liberation Mono", monospace;
font-size: 10px;
color: #aca899;
`;

const Mode = styled.button`
height: 19px;
padding: 0 1px;
line-height: 17px;
white-space: nowrap;
border: 1px solid;
border-color: ${p => p.$on ? '#000 #fff #fff #000' : '#fff #aca899 #aca899 #fff'};
background: ${p => p.$on ? '#f6f4ec' : '#ece9d8'};
`;

const CadTray = styled.div`
margin-left: auto;
height: 18px;
width: 44px;
display: flex;
align-items: center;
justify-content: space-around;
border: 1px solid #c4c0b0;
`;

const Taskbar = styled.div`
height: 29px;
display: flex;
align-items: center;
background: linear-gradient(#5b9bf8, #2a66e0 4px, #245ddb 20px, #1c4cb8);
color: #fff;
`;

const StartButton = styled.button`
width: 37px;
height: 29px;
padding: 0;
text-align: left;
text-indent: -3px;
border: 0;
border-radius: 0 10px 10px 0;
background: linear-gradient(#6cb868, #3c9a3c 6px, #359435 20px, #27752a);
color: #fff;
font-size: 18px;
font-style: italic;
line-height: 26px;
`;

const QuickLaunch = styled.div`
width: 72px;
display: flex;
gap: 8px;
padding-left: 12px;
`;

const Task = styled.button`
width: 158px;
height: 24px;
margin-right: 2px;
padding: 0 8px;
display: flex;
align-items: center;
gap: 4px;
border: 0;
border-radius: 3px;
background: linear-gradient(#5c9cff, #3c80f4 4px, #3a7cf0);
color: #fff;
white-space: nowrap;
`;

const LanguageBar = styled.div`
margin-left: auto;
margin-right: 80px;
display: flex;
align-items: center;
gap: 8px;
`;

const SystemTray = styled.div`
width: 95px;
height: 29px;
display: flex;
align-items: center;
gap: 3px;
border-left: 1px solid #104090;
background: linear-gradient(#4cbcf8, #169af0 5px, #128ee8 22px, #0c74c8);

${Mono}{
    margin-left: 8px;
}
`;

const Chevron = styled.button`
width: 16px;
height: 16px;
margin-left: -9px;
padding: 0;
display: flex;
align-items: center;
justify-content: center;
border: 1px solid #9cd4ff;
border-radius: 50%;
background: #2474dc;
`;

/* the notice lies over the toolbars and the command line */
const Balloon = styled.section`
position: absolute;
right: 6px;
bottom: 59px;
width: 185px;
height: 75px;
padding: 6px 8px 0 15px;
border: 1px solid #000;
border-radius: 14px;
background: #ffffe1;
line-height: 18px;
white-space: nowrap;

p{
    margin: 2px 0 0;
}

a{
    color: #00f;
}
`;

const BalloonHead = styled.header`
display: flex;
align-items: center;
gap: 10px;
margin-left: -6px;
height: 20px;

strong{
    font-size: 13px;
}
`;

const CloseButton = styled.button`
width: 16px;
height: 16px;
margin-left: auto;
padding: 0;
display: flex;
align-items: center;
justify-content: center;
border: 1px solid #716f64;
background: #ece9d8;
`;

const Tail = styled.svg`
position: absolute;
right: 39px;
bottom: -20px;
`;

export default App
